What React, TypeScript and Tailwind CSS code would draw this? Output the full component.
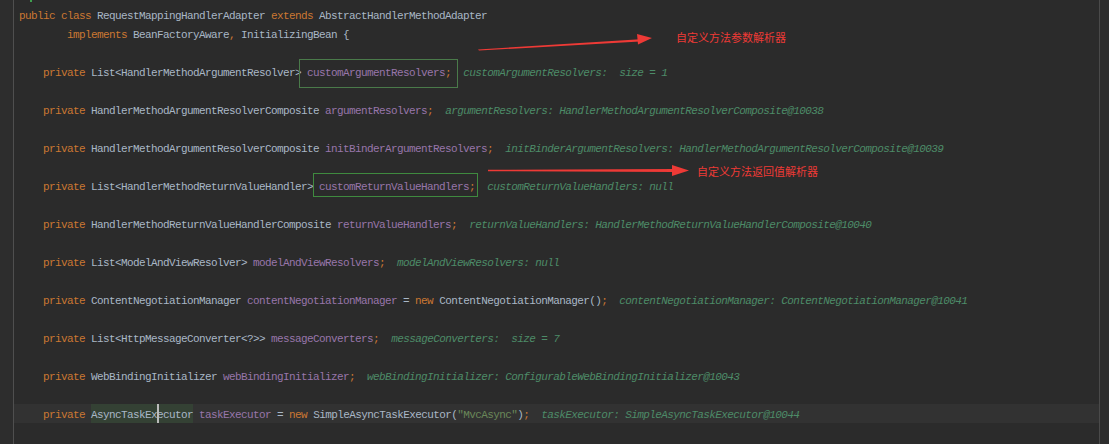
import React from "react";

type Seg = [string, string];

const KW = "text-[#cc7832]";
const TY = "text-[#a9b7c6]";
const FD = "text-[#9876aa]";
const VL = "text-[#4d8b68] italic";
const ST = "text-[#6a8759]";
const HL = "text-[#a9b7c6] bg-[#344134]";

const lines: Seg[][] = [
  [[KW, "public class "], [TY, "RequestMappingHandlerAdapter "], [KW, "extends "], [TY, "AbstractHandlerMethodAdapter"]],
  [[TY, "        "], [KW, "implements "], [TY, "BeanFactoryAware"], [KW, ", "], [TY, "InitializingBean {"]],
  [],
  [[TY, "    "], [KW, "private "], [TY, "List<HandlerMethodArgumentResolver> "], [FD, "customArgumentResolvers"], [KW, ";"], [VL, "  customArgumentResolvers:  size = 1"]],
  [],
  [[TY, "    "], [KW, "private "], [TY, "HandlerMethodArgumentResolverComposite "], [FD, "argumentResolvers"], [KW, ";"], [VL, "  argumentResolvers: HandlerMethodArgumentResolverComposite@10038"]],
  [],
  [[TY, "    "], [KW, "private "], [TY, "HandlerMethodArgumentResolverComposite "], [FD, "initBinderArgumentResolvers"], [KW, ";"], [VL, "  initBinderArgumentResolvers: HandlerMethodArgumentResolverComposite@10039"]],
  [],
  [[TY, "    "], [KW, "private "], [TY, "List<HandlerMethodReturnValueHandler> "], [FD, "customReturnValueHandlers"], [KW, ";"], [VL, "  customReturnValueHandlers: null"]],
  [],
  [[TY, "    "], [KW, "private "], [TY, "HandlerMethodReturnValueHandlerComposite "], [FD, "returnValueHandlers"], [KW, ";"], [VL, "  returnValueHandlers: HandlerMethodReturnValueHandlerComposite@10040"]],
  [],
  [[TY, "    "], [KW, "private "], [TY, "List<ModelAndViewResolver> "], [FD, "modelAndViewResolvers"], [KW, ";"], [VL, "  modelAndViewResolvers: null"]],
  [],
  [[TY, "    "], [KW, "private "], [TY, "ContentNegotiationManager "], [FD, "contentNegotiationManager"], [TY, " = "], [KW, "new "], [TY, "ContentNegotiationManager()"], [KW, ";"], [VL, "  contentNegotiationManager: ContentNegotiationManager@10041"]],
  [],
  [[TY, "    "], [KW, "private "], [TY, "List<HttpMessageConverter<?>> "], [FD, "messageConverters"], [KW, ";"], [VL, "  messageConverters:  size = 7"]],
  [],
  [[TY, "    "], [KW, "private "], [TY, "WebBindingInitializer "], [FD, "webBindingInitializer"], [KW, ";"], [VL, "  webBindingInitializer: ConfigurableWebBindingInitializer@10043"]],
  [],
  [[TY, "    "], [KW, "private "], [HL, "AsyncTaskExecutor"], [TY, " "], [FD, "taskExecutor"], [TY, " = "], [KW, "new "], [TY, "SimpleAsyncTaskExecutor("], [ST, "\"MvcAsync\""], [TY, ")"], [KW, ";"], [VL, "  taskExecutor: SimpleAsyncTaskExecutor@10044"]],
  [],
];

export default function App() {
  return (
    <div className="relative w-[1109px] h-[444px] overflow-hidden bg-[#2b2b2b] flex">
      {/* gutter */}
      <div className="w-[14px] shrink-0 h-full border-r border-[#4f4f4f] bg-[#2d2d2d]" />
      {/* code area */}
      <div className="w-[1085px] shrink-0 h-full pt-[5px] flex flex-col font-['Liberation_Mono',monospace] text-[11px] tracking-[-0.6px]">
        {lines.map((segs, i) => (
          <div
            key={i}
            className={
              "h-[19px] pt-[3px] leading-[16px] pl-[5px] whitespace-pre " +
              (i === 21 ? "bg-[#323232]" : "")
            }
          >
            {segs.map(([cls, t], j) => (
              <span
                key={j}
                className={cls + (cls === HL ? " relative inline-block h-[19px] -mt-[3px] pt-[3px]" : "")}
              >
                {t}
                {cls === HL && (
                  <span className="absolute left-[66px] top-0 w-[2px] h-[19px] bg-[#bbbbbb]" />
                )}
              </span>
            ))}
          </div>
        ))}
      </div>
      {/* right margin */}
      <div className="flex-1 h-full border-l border-[#4a4a4a] bg-[#2d2d2d]" />

      {/* tiny marker at top */}
      <div className="absolute left-[30px] top-0 w-[2px] h-[2px] bg-[#3f9f4f]" />

      {/* highlight boxes */}
      <div className="absolute left-[299px] top-[59px] w-[159px] h-[29px] border border-[#4a7a4a]" />
      <div className="absolute left-[313px] top-[173px] w-[165px] h-[24px] border border-[#3f8a3f]" />

      {/* arrows */}
      <svg className="absolute left-0 top-0" width="1109" height="444" viewBox="0 0 1109 444">
        <polygon points="478,49.5 640,39.2 640,41.6 479,50.5" fill="#ee3a36" />
        <polygon points="637,34 652,38 638,44.5" fill="#ee3a36" />
        <polygon points="488,169.8 674,169 674,172 488,171.2" fill="#ee3a36" />
        <polygon points="672,165 689,170.5 672,176" fill="#ee3a36" />
      </svg>

      {/* annotations */}
      <div className="absolute left-[676px] top-[29px] text-[11px] leading-[16px] text-[#ee3a36] font-['Noto_Sans_CJK_SC',sans-serif]">
        自定义方法参数解析器
      </div>
      <div className="absolute left-[697px] top-[163px] text-[11px] leading-[16px] text-[#ee3a36] font-['Noto_Sans_CJK_SC',sans-serif]">
        自定义方法返回值解析器
      </div>
    </div>
  );
}
